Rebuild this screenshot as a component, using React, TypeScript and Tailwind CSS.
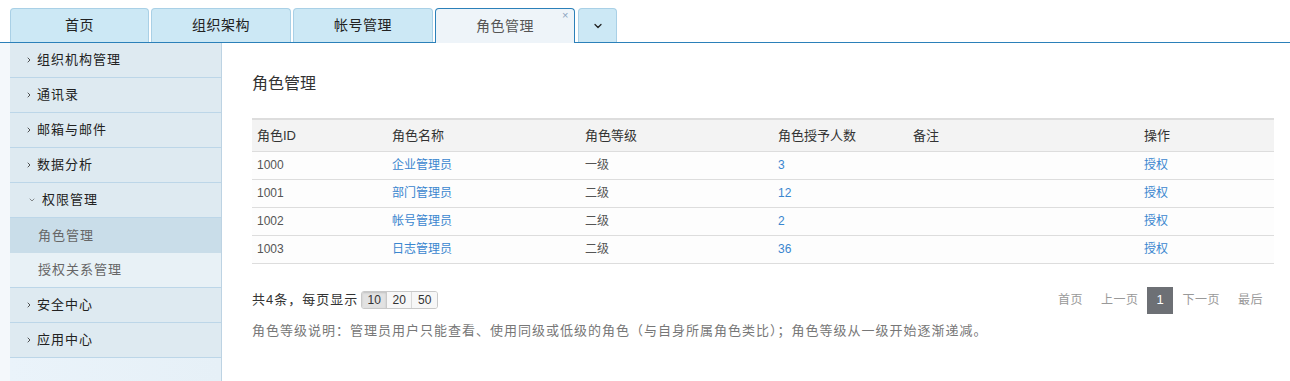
import { ChevronDown, ChevronRight } from "lucide-react";

const tabs = ["首页", "组织架构", "帐号管理"];

const menu = [
  { label: "组织机构管理" },
  { label: "通讯录" },
  { label: "邮箱与邮件" },
  { label: "数据分析" },
  { label: "权限管理", open: true, children: ["角色管理", "授权关系管理"] },
  { label: "安全中心" },
  { label: "应用中心" },
];

const rows = [
  { id: "1000", name: "企业管理员", level: "一级", count: "3" },
  { id: "1001", name: "部门管理员", level: "二级", count: "12" },
  { id: "1002", name: "帐号管理员", level: "二级", count: "2" },
  { id: "1003", name: "日志管理员", level: "二级", count: "36" },
];

function Tabs() {
  return (
    <div className="flex items-end h-[35px] pl-[10px] gap-[2px] border-b border-[#2b80b9]">
      {tabs.map((t, i) => (
        <div
          key={t}
          className={
            "h-[34px] flex items-center justify-center rounded-t-[4px] border border-b-0 border-[#a9d0e6] bg-[#cce8f5] text-[14px] text-[#222] tracking-[0.5px] " +
            (i === 0 ? "w-[139px]" : "w-[140px]")
          }
        >
          {t}
        </div>
      ))}
      {/* active tab */}
      <div className="relative w-[140px] h-[35px] -mb-px flex items-center justify-center rounded-t-[4px] border border-b-0 border-[#2b80b9] bg-[#eef4f9] text-[14px] text-[#555] tracking-[0.5px]">
        角色管理
        <span className="absolute right-[5px] top-[1px] text-[11px] leading-none text-[#8aa4c0]">×</span>
      </div>
      <div className="ml-px w-[39px] h-[34px] flex items-center justify-center rounded-t-[4px] border border-b-0 border-[#a9d0e6] bg-[#cce8f5]">
        <ChevronDown className="size-3 text-[#222]" strokeWidth={2.5} />
      </div>
    </div>
  );
}

function Sidebar() {
  return (
    <div className="flex bg-[#f4f8fb]">
      <div className="w-[10px]" />
      <div className="w-[212px] flex flex-col border-r border-[#bdd3e3] bg-[#deeaf1]">
        {menu.map((m) => (
          <div key={m.label}>
            <div className="h-[35px] flex items-center border-b border-[#bcd6e8] pl-[15px] text-[13px] text-[#222] tracking-[1px]">
              {m.open ? (
                <ChevronDown className="size-[8px] ml-[3px] mr-[6px] text-[#555]" strokeWidth={2} />
              ) : (
                <ChevronRight className="size-[8px] mr-[4px] text-[#333]" strokeWidth={2.5} />
              )}
              {m.label}
            </div>
            {m.children?.map((c, i) => (
              <div
                key={c}
                className={
                  "h-[35px] flex items-center pl-[28px] text-[13px] text-[#666] tracking-[1px] " +
                  (i === 0 ? "bg-[#c9dde9]" : "bg-[#e8f1f6] border-b border-[#bcd6e8]")
                }
              >
                {c}
              </div>
            ))}
          </div>
        ))}
        <div className="flex-1 bg-gradient-to-r from-[#eaf3fa] to-[#e6f0f7]" />
      </div>
    </div>
  );
}

function RoleTable() {
  return (
    <table className="w-full border-collapse text-left">
      <thead>
        <tr className="h-[32px] bg-[#f3f3f3] border-t-2 border-b border-[#dddddd] text-[13px] text-[#333]">
          <th className="font-normal pl-[5px] w-[140px]">角色ID</th>
          <th className="font-normal w-[193px]">角色名称</th>
          <th className="font-normal w-[193px]">角色等级</th>
          <th className="font-normal w-[135px]">角色授予人数</th>
          <th className="font-normal w-[231px]">备注</th>
          <th className="font-normal">操作</th>
        </tr>
      </thead>
      <tbody className="text-[12px]">
        {rows.map((r) => (
          <tr key={r.id} className="h-[28px] border-b border-[#dddddd] bg-[#fdfdfd]">
            <td className="pl-[5px] text-[#555]">{r.id}</td>
            <td className="text-[#3a86cf]">{r.name}</td>
            <td className="text-[#555]">{r.level}</td>
            <td className="text-[#3a86cf]">{r.count}</td>
            <td />
            <td className="text-[#3a86cf]">授权</td>
          </tr>
        ))}
      </tbody>
    </table>
  );
}

function Footer() {
  return (
    <div className="mt-[23px]">
      <div className="flex items-center justify-between pr-[2px]">
        <div className="flex items-center text-[13px] text-[#333] tracking-[1px]">
          共4条，每页显示
          <div className="ml-[3px] flex h-[18px] border border-[#c9c9c9] rounded-[3px] overflow-hidden text-[12px] tracking-normal">
            <span className="w-[25px] flex items-center justify-center bg-[#e2e2e2] border-r border-[#c9c9c9] shadow-[inset_0_1px_2px_rgba(0,0,0,0.15)]">10</span>
            <span className="w-[25px] flex items-center justify-center bg-[#f7f7f7] border-r border-[#d9d9d9]">20</span>
            <span className="w-[25px] flex items-center justify-center bg-[#f7f7f7]">50</span>
          </div>
        </div>
        <div className="flex items-center text-[12px] text-[#999] tracking-[0.5px]">
          <span className="px-[9px]">首页</span>
          <span className="px-[9px]">上一页</span>
          <span className="w-[26px] h-[27px] flex items-center justify-center bg-[#6d7075] text-white text-[13px]">1</span>
          <span className="px-[9px]">下一页</span>
          <span className="px-[9px]">最后</span>
        </div>
      </div>
      <p className="mt-[7px] text-[13px] text-[#777] tracking-[1px]">
        角色等级说明：管理员用户只能查看、使用同级或低级的角色（与自身所属角色类比）；角色等级从一级开始逐渐递减。
      </p>
    </div>
  );
}

export default function App() {
  return (
    <div
      className="w-[1290px] h-[381px] bg-white overflow-hidden pt-[8px]"
      style={{ fontFamily: '"Liberation Sans", "Noto Sans CJK SC", sans-serif' }}
    >
      <Tabs />
      <div className="flex h-[338px]">
        <Sidebar />
        <div className="flex-1 pl-[30px] pr-[16px] pt-[30px]">
          <h2 className="text-[16px] text-[#333] leading-[22px] mb-[23px]">角色管理</h2>
          <RoleTable />
          <Footer />
        </div>
      </div>
    </div>
  );
}
